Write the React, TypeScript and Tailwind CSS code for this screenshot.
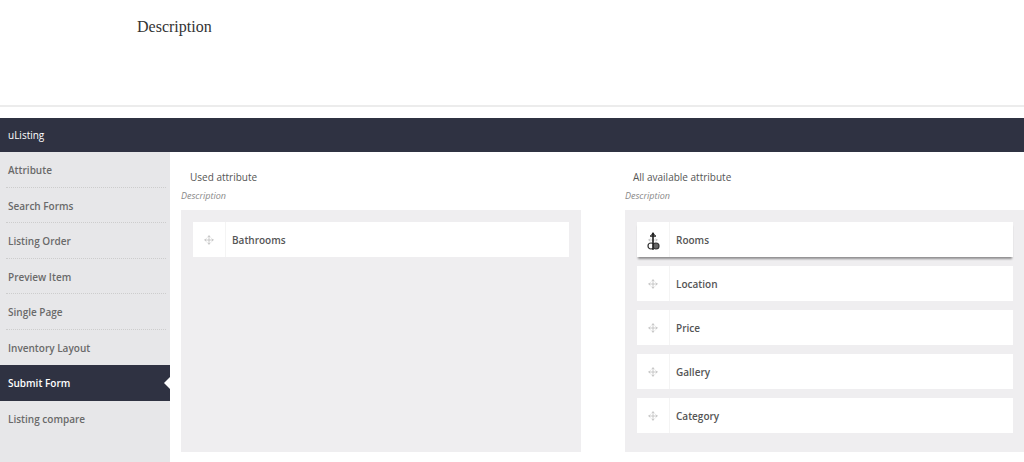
import React from 'react';
import { Move } from 'lucide-react';

const menu = [
  'Attribute',
  'Search Forms',
  'Listing Order',
  'Preview Item',
  'Single Page',
  'Inventory Layout',
  'Submit Form',
  'Listing compare',
];

const used = ['Bathrooms'];
const available = ['Rooms', 'Location', 'Price', 'Gallery', 'Category'];

const AttrItem: React.FC<{ label: string; dragging?: boolean }> = ({ label, dragging }) => (
  <div
    className={`relative flex h-[35px] items-center bg-white ${
      dragging ? 'shadow-[0_3px_2px_-1px_rgba(0,0,0,0.4)]' : ''
    }`}
  >
    <div className="flex h-full w-[33px] items-center justify-center border-r border-[#f4f4f4]">
      <Move size={10} strokeWidth={1.6} className="text-[#b3b3b3]" />
    </div>
    <span className="pl-[6px] pt-[1px] text-[10px] font-semibold text-[#555]">{label}</span>
    {dragging && (
      // move cursor caught mid-drag
      <svg className="absolute left-[8px] top-[10px]" width="18" height="20" viewBox="0 0 18 20">
        <path d="M8 1v11M5 4h6" stroke="#222" strokeWidth="1.6" fill="none" />
        <path d="M8 0l-2 3h4z" fill="#222" />
        <circle cx="6" cy="14" r="3" fill="#fff" stroke="#333" strokeWidth="1.2" />
        <circle cx="11" cy="14" r="3" fill="#666" stroke="#333" strokeWidth="1.2" />
        <path d="M8 11v7" stroke="#222" strokeWidth="1.4" />
      </svg>
    )}
  </div>
);

const Column: React.FC<{ title: string; items: string[]; titleIndent: string; dragFirst?: boolean }> = ({
  title,
  items,
  titleIndent,
  dragFirst,
}) => (
  <div className="flex w-[400px] shrink-0 flex-col">
    <div className={`pt-[18px] text-[10px] leading-[14px] text-[#555] ${titleIndent}`}>{title}</div>
    <div className="pt-[6px] text-[9px] italic leading-[12px] text-[#888]">Description</div>
    <div className="mt-[8px] flex h-[242px] flex-col gap-[9px] bg-[#efeef0] p-[12px]">
      {items.map((it, i) => (
        <AttrItem key={it} label={it} dragging={dragFirst && i === 0} />
      ))}
    </div>
  </div>
);

export default function App() {
  return (
    <div className="h-[462px] w-[1024px] overflow-hidden bg-white font-['Open_Sans',sans-serif]">
      {/* page title */}
      <div className="h-[105px] pl-[137px] pt-[15px] font-['Liberation_Serif',serif] text-[16px] text-[#333]">
        Description
      </div>
      <div className="h-[2px] bg-[#ececec]" />
      <div className="h-[11px]" />

      {/* plugin bar */}
      <div className="flex h-[34px] items-center bg-[#2f3242] pl-[8px] text-[10px] text-white">uListing</div>

      <div className="flex h-[310px]">
        {/* Sidebar */}
        <div className="w-[170px] shrink-0 bg-[#e7e7e9]">
          {menu.map((m) => {
            const active = m === 'Submit Form';
            return (
              <div
                key={m}
                className={`relative flex h-[35.5px] items-center pl-[8px] pt-[2px] text-[10px] font-semibold ${
                  active ? 'bg-[#2f3242] text-white' : 'text-[#6a6a6a]'
                }`}
              >
                {m}
                {!active && m !== 'Inventory Layout' && m !== 'Listing compare' && (
                  <div className="absolute bottom-0 left-[6px] right-[4px] border-b border-dotted border-[#cdcdcd]" />
                )}
                {active && (
                  <div className="absolute right-0 top-1/2 h-0 w-0 -translate-y-1/2 border-y-[6px] border-r-[6px] border-y-transparent border-r-white" />
                )}
              </div>
            );
          })}
        </div>

        {/* Attribute columns */}
        <div className="flex flex-1 gap-[44px] pl-[11px]">
          <Column title="Used attribute" items={used} titleIndent="pl-[9px]" />
          <Column title="All available attribute" items={available} titleIndent="pl-[8px]" dragFirst />
        </div>
      </div>
    </div>
  );
}
